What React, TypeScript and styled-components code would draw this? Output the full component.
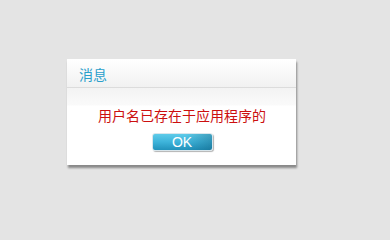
import React from "react";
import styled, { createGlobalStyle } from "styled-components";

const GlobalStyle = createGlobalStyle`
  html, body {
    margin: 0;
    padding: 0;
    background: #e4e4e4;
  }
`;

function App() {
  return (
    <>
      <GlobalStyle />
      <StyledPage>
        <StyledDialog>
          <StyledHeader>
            <StyledTitle>消息</StyledTitle>
          </StyledHeader>
          <StyledBody>
            <StyledMessage>用户名已存在于应用程序的</StyledMessage>
            <StyledOkButton type="button">OK</StyledOkButton>
          </StyledBody>
        </StyledDialog>
      </StyledPage>
    </>
  );
}

export default App;

const StyledPage = styled.div`
  display: flex;
  align-items: flex-start;
  width: 390px;
  height: 222px;
  box-sizing: border-box;
  padding: 59px 0 0 67px;
  background: #e4e4e4;
`;

const StyledDialog = styled.div`
  display: flex;
  flex-direction: column;
  width: 229px;
  height: 106px;
  background: #fefefe;
  box-shadow: 1px 3px 2px rgba(0, 0, 0, 0.4);
`;

const StyledHeader = styled.div`
  display: flex;
  align-items: center;
  height: 28px;
  padding-left: 12px;
  background: linear-gradient(to bottom, #ffffff 0%, #f1f1f1 100%);
  border-bottom: 1px solid #dcdcdc;
`;

const StyledTitle = styled.span`
  font-family: "Noto Sans CJK SC", sans-serif;
  font-size: 14px;
  line-height: 14px;
  color: #2b9fcb;
  margin-top: 1px;
`;

const StyledBody = styled.div`
  flex: 1;
  display: flex;
  flex-direction: column;
  align-items: center;
  padding-top: 19px;
  background: linear-gradient(to bottom, #f3f3f3 0px, #fafafa 17px, #ffffff 18px, #ffffff 100%);
`;

const StyledMessage = styled.div`
  font-family: "Noto Sans CJK SC", sans-serif;
  font-size: 14px;
  line-height: 16px;
  color: #cc0f0f;
  margin-left: 1px;
`;

const StyledOkButton = styled.button`
  margin-top: 10px;
  margin-left: 1px;
  width: 61px;
  height: 18px;
  padding: 0;
  border: 1px solid #d8e6ec;
  border-radius: 3px;
  background:
    linear-gradient(to right, rgba(10, 80, 110, 0) 55%, rgba(10, 80, 110, 0.35) 100%),
    linear-gradient(to bottom, #5ecbe9 0%, #3db3da 50%, #2192bb 100%);
  box-shadow: 1px 1px 1px rgba(0, 0, 0, 0.3);
  color: #ffffff;
  font-family: "Liberation Sans", Arial, sans-serif;
  font-size: 14px;
  line-height: 16px;
  cursor: pointer;
`;
